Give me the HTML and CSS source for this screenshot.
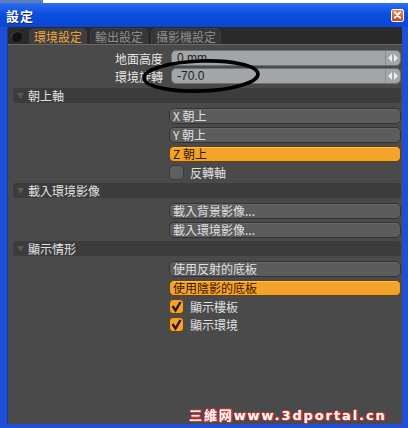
FILE: index.html
```html
<!DOCTYPE html>
<html lang="zh-Hant">
<head>
    <meta charset="UTF-8">
    <title>設定</title>
    <link rel="stylesheet" href="styles.css">
</head>
<body>
<div class="topstrip"><span class="ts-left"></span></div>
<div class="win">
    <div class="titlebar">
        <span class="title">設定</span>
        <span class="close">
            <svg width="12" height="12" viewBox="0 0 12 12"><path d="M3 3 L9 9 M9 3 L3 9" stroke="#fff" stroke-width="2" stroke-linecap="round"/></svg>
        </span>
    </div>
    <div class="body">
        <div class="tabs">
            <span class="knob"></span>
            <span class="tab active">環境設定</span>
            <span class="tab">輸出設定</span>
            <span class="tab">攝影機設定</span>
        </div>

        <div class="content">
            <div class="field-row">
                <label>地面高度</label>
                <div class="field"><span>0 mm</span><span class="spin"><svg width="10" height="8" viewBox="0 0 10 8"><path d="M4 0 L0 4 L4 8 Z M6 0 L10 4 L6 8 Z" fill="#ececec"/></svg></span></div>
            </div>
            <div class="field-row">
                <label>環境旋轉</label>
                <div class="field"><span>-70.0</span><span class="spin"><svg width="10" height="8" viewBox="0 0 10 8"><path d="M4 0 L0 4 L4 8 Z M6 0 L10 4 L6 8 Z" fill="#ececec"/></svg></span></div>
            </div>

            <div class="section first"><span class="tri">▼</span>朝上軸</div>
            <div class="group">
                <div class="btn">X 朝上</div>
                <div class="btn">Y 朝上</div>
                <div class="btn on">Z 朝上</div>
                <div class="check"><span class="box"></span>反轉軸</div>
            </div>

            <div class="section"><span class="tri">▼</span>載入環境影像</div>
            <div class="group">
                <div class="btn">載入背景影像...</div>
                <div class="btn">載入環境影像...</div>
            </div>

            <div class="section"><span class="tri">▼</span>顯示情形</div>
            <div class="group">
                <div class="btn">使用反射的底板</div>
                <div class="btn on">使用陰影的底板</div>
                <div class="check"><span class="box checked"><svg width="13" height="13" viewBox="0 0 13 13"><path d="M2.5 6 L5.5 10.5 L10.5 2" fill="none" stroke="#2a1400" stroke-width="2.4"/></svg></span>顯示樓板</div>
                <div class="check"><span class="box checked"><svg width="13" height="13" viewBox="0 0 13 13"><path d="M2.5 6 L5.5 10.5 L10.5 2" fill="none" stroke="#2a1400" stroke-width="2.4"/></svg></span>顯示環境</div>
            </div>

            <!-- annotation drawn on the screenshot -->
            <svg class="mark" width="130" height="40" viewBox="0 0 130 40">
                <ellipse cx="64" cy="19" rx="57" ry="15" transform="rotate(-2 64 19)" fill="none" stroke="#000" stroke-width="3.6"/>
            </svg>
            <div class="wm">三維网www.3dportal.cn</div>
        </div>
    </div>
</div>
</body>
</html>
```

FILE: styles.css
```css
*{box-sizing:border-box;}
body{margin:0;width:408px;height:428px;overflow:hidden;background:#fff;font-family:"Noto Sans CJK TC","Liberation Sans",sans-serif;}
.topstrip{height:3px;background:#fff;display:flex;}
.ts-left{width:43px;background:#5d7fb8;}
.win{height:425px;display:flex;flex-direction:column;background:#1f4fd6;}
.titlebar{height:24px;display:flex;align-items:center;justify-content:space-between;padding:0 4px 0 6px;background:linear-gradient(#2f6cf0,#0c4ee0 45%,#0846d6);}
.title{color:#fff;font-size:13px;font-weight:700;letter-spacing:1px;text-shadow:1px 1px 0 #0a2a80;}
.close{width:13px;height:13px;border:1px solid #fff;border-radius:2px;background:linear-gradient(#e28a6a,#c4451f);display:flex;align-items:center;justify-content:center;}
.body{flex:1;margin:0 6px 4px 7px;background:#4a4a4a;border-left:1px solid #163a9a;display:flex;flex-direction:column;}
.tabs{height:18px;background:#2a2a2a;border-bottom:1px solid #6a6a6a;display:flex;align-items:flex-end;padding-left:3px;gap:3px;}
.knob{width:11px;height:11px;border-radius:50%;background:#111;box-shadow:inset 1px 1px 1px #444;margin:0 4px 2px 0;}
.tab{font-size:12px;line-height:15px;padding:0 4px;height:16px;border-radius:5px 5px 0 0;background:#363636;color:#8e8e8e;border:1px solid #3e3e3e;border-bottom:none;}
.tab.active{background:#3e3e3e;color:#f2a840;}
.content{flex:1;position:relative;padding:5px 1px 0 5px;display:flex;flex-direction:column;}
.field-row{display:flex;align-items:center;height:16px;margin-bottom:2px;}
.field-row label{width:153px;text-align:right;padding-right:3px;color:#e6e6e6;font-size:12px;}
.field{margin-left:5px;flex:1;height:16px;border-radius:5px;background:#a3a6a8;border:1px solid #6e7072;display:flex;align-items:center;justify-content:space-between;padding:0 0 0 5px;font-size:12px;color:#1e1e1e;font-family:"Liberation Sans",sans-serif;}
.spin{width:15px;height:14px;border-left:1px solid #8a8c8e;display:flex;align-items:center;justify-content:center;}
.section{margin-top:3px;height:15px;background:#3c3c3c;border-radius:3px;color:#e2e2e2;font-size:12px;line-height:15px;display:flex;align-items:center;}
.section.first{margin-top:2px;}
.tri{font-size:7px;color:#5a5a5a;width:15px;text-align:center;}
.group{display:flex;flex-direction:column;gap:3px;padding:5px 0 0 156px;}
.btn{height:16px;border-radius:5px;background:#5c5c5c;border:1px solid #333;box-shadow:inset 0 1px 0 #686868;color:#e0e0e0;font-size:12px;line-height:14px;padding-left:3px;}
.btn.on{background:#f3a22a;border-color:#6b3f0c;box-shadow:inset 0 1px 0 #f8bf60;color:#3a1800;}
.check{display:flex;align-items:center;height:16px;color:#e0e0e0;font-size:12px;margin-top:-1px;}
.box{width:15px;height:15px;border-radius:4px;background:#5e5e5e;border:1px solid #3a3a3a;margin-right:6px;display:flex;align-items:center;justify-content:center;}
.box.checked{background:#f3a22a;border-color:#6b3f0c;}
.mark{position:absolute;left:129px;top:12px;}
.wm{position:absolute;left:181px;top:360px;font-size:13px;font-weight:700;font-family:"DejaVu Sans","Noto Sans CJK SC",sans-serif;color:#fff;letter-spacing:1.9px;text-shadow:1px 0 0 #e23030,-1px 0 0 #e23030,0 1px 0 #e23030,0 -1px 0 #e23030;}
```
